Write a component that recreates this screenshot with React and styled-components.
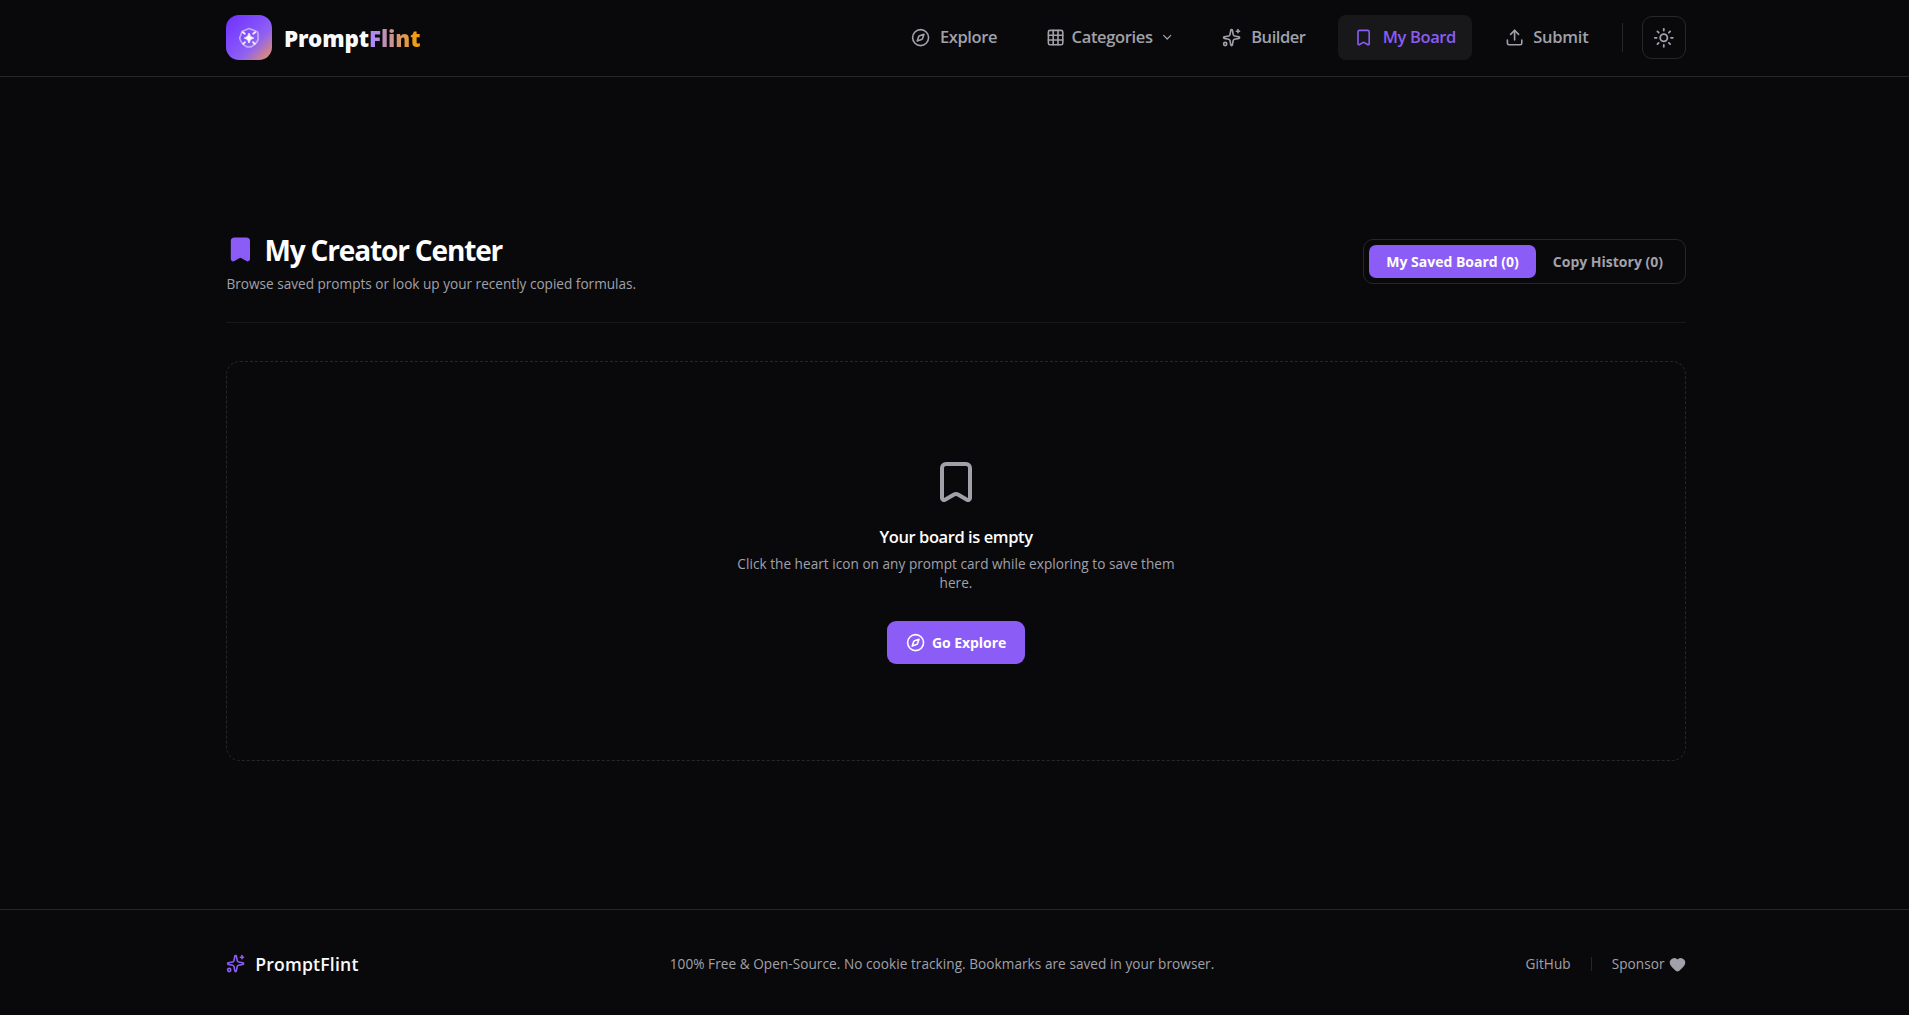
import React from 'react';
import styled, { createGlobalStyle } from 'styled-components';
import { ChevronDown, Compass, Grid3x3, Heart, Sparkles, Sun, Upload } from 'lucide-react';

const COLORS = {
  Background: '#09090b',
  Surface: '#18181b',
  Border: '#27272a',
  Muted: '#a1a1aa',
  Purple: '#8b5cf6',
  White: '#fafafa',
};

const GlobalStyle = createGlobalStyle`
  * {
    box-sizing: border-box;
    margin: 0;
    padding: 0;
  }

  body {
    background: ${COLORS.Background};
    color: ${COLORS.White};
    font-family: 'Open Sans', 'Noto Sans', sans-serif;
    overflow: hidden;
  }

  svg {
    display: block;
    flex-shrink: 0;
  }
`;

const Page = styled.div`
  display: flex;
  flex-direction: column;
  height: 100vh;
`;

const Header = styled.header`
  display: flex;
  align-items: center;
  justify-content: space-between;
  height: 77px;
  padding: 0 223px 1px 226px;
  border-bottom: 1px solid ${COLORS.Border};
`;

const Brand = styled.a`
  display: flex;
  align-items: center;
  gap: 12px;
`;

const BrandIcon = styled.span`
  display: flex;
  align-items: center;
  justify-content: center;
  width: 46px;
  height: 45px;
  border-radius: 13px;
  background: linear-gradient(135deg, #7030ff 0%, #8450fb 45%, #9163ee 65%, #f0965a 100%);
`;

const BrandName = styled.span`
  font-family: 'Noto Sans', 'Open Sans', sans-serif;
  font-size: 22.4px;
  font-weight: 900;
  letter-spacing: -0.1px;
  line-height: 30px;
  padding-top: 3px;
`;

const BrandAccent = styled.span`
  background: linear-gradient(90deg, #a78bfa 5%, #f59e0b 95%);
  background-clip: text;
  color: transparent;
`;

const Nav = styled.nav`
  display: flex;
  align-items: center;
  gap: 16.5px;
`;

const NavItem = styled.a`
  display: flex;
  align-items: center;
  gap: ${({ $tight }) => ($tight ? '6.9px' : '9.6px')};
  height: 45px;
  padding: 0 16px;
  border-radius: 8px;
  color: ${({ $active }) => ($active ? COLORS.Purple : COLORS.Muted)};
  background: ${({ $active }) => ($active ? COLORS.Surface : 'transparent')};
`;

const NavLabel = styled.span`
  padding-bottom: 2px;
  font-size: 16.5px;
  font-weight: 600;
  letter-spacing: ${({ $tracking }) => $tracking}px;
  white-space: nowrap;
`;

const NavDivider = styled.span`
  width: 1px;
  height: 29px;
  margin: 0 2.5px 0 1px;
  background: ${COLORS.Border};
`;

const ThemeButton = styled.button`
  display: flex;
  align-items: center;
  justify-content: center;
  width: 44px;
  height: 43px;
  border: 1px solid ${COLORS.Border};
  border-radius: 10px;
  background: transparent;
  color: ${COLORS.Muted};
`;

const Main = styled.main`
  flex: 1;
  padding: 152px 223px 0 226px;
`;

const PageHead = styled.div`
  display: flex;
  align-items: center;
  justify-content: space-between;
  padding-bottom: 28px;
  border-bottom: 1px solid ${COLORS.Surface};
  margin-bottom: 38px;
`;

const Title = styled.h1`
  display: flex;
  align-items: center;
  gap: 9.6px;
  height: 41px;
  font-size: 28px;
  font-weight: 700;
  letter-spacing: -1.15px;
  color: #fff;
`;

const Subtitle = styled.p`
  margin-top: 3px;
  padding-left: 0.5px;
  font-size: 13.6px;
  line-height: 21px;
  color: ${COLORS.Muted};
`;

const Tabs = styled.div`
  display: flex;
  padding: 5px;
  border: 1px solid ${COLORS.Border};
  border-radius: 10px;
`;

const Tab = styled.button`
  height: 33px;
  padding: 0 17px;
  border: 0;
  border-radius: 7px;
  font-family: inherit;
  font-size: 14px;
  font-weight: 700;
  color: ${({ $active }) => ($active ? '#fff' : COLORS.Muted)};
  background: ${({ $active }) => ($active ? COLORS.Purple : 'transparent')};
`;

const EmptyCard = styled.section`
  display: flex;
  flex-direction: column;
  align-items: center;
  justify-content: center;
  height: 400px;
  border: 1px dashed ${COLORS.Border};
  border-radius: 14px;
  color: ${COLORS.Muted};
`;

const EmptyTitle = styled.h2`
  margin-top: 19px;
  font-size: 16.5px;
  font-weight: 600;
  letter-spacing: -0.42px;
  line-height: 24px;
  color: #fff;
`;

const EmptyText = styled.p`
  width: 448px;
  margin-top: 5px;
  font-size: 13.6px;
  letter-spacing: 0.03px;
  line-height: 19px;
  text-align: center;
`;

const ExploreButton = styled.button`
  display: flex;
  align-items: center;
  gap: 7px;
  height: 43px;
  margin-top: 29px;
  padding: 0 19px;
  border: 0;
  border-radius: 9px;
  font-family: inherit;
  font-size: 14px;
  font-weight: 700;
  letter-spacing: -0.06px;
  color: #fff;
  background: ${COLORS.Purple};
`;

const Footer = styled.footer`
  display: flex;
  align-items: center;
  justify-content: space-between;
  height: 106px;
  padding: 3px 223px 0 226px;
  border-top: 1px solid ${COLORS.Border};
  font-size: 13.6px;
  color: ${COLORS.Muted};
`;

const FooterBrand = styled.div`
  display: flex;
  align-items: center;
  gap: 10px;
  font-size: 17.6px;
  font-weight: 600;
  letter-spacing: 0.2px;
  color: ${COLORS.White};

  svg {
    color: ${COLORS.Purple};
  }
`;

const FooterNote = styled.p`
  padding-bottom: 2px;
  letter-spacing: 0.05px;
`;

const FooterLinks = styled.div`
  display: flex;
  align-items: center;
  gap: 20px;
`;

const FooterLink = styled.a`
  display: flex;
  align-items: center;
  gap: 4.5px;
  padding-bottom: 2px;
  letter-spacing: 0.05px;

  svg {
    margin-top: 2px;
  }
`;

const FooterDivider = styled.span`
  width: 1px;
  height: 14px;
  background: ${COLORS.Border};
`;

const Bookmark = ({ size, fill = 'none', color = 'currentColor' }) => (
  <svg
    width={size}
    height={size}
    viewBox="0 0 24 24"
    fill={fill}
    stroke={color}
    strokeWidth="2"
    strokeLinecap="round"
    strokeLinejoin="round"
  >
    <path d="M17 3a2 2 0 0 1 2 2v15a1 1 0 0 1-1.496.868l-4.512-2.578a2 2 0 0 0-1.984 0l-4.512 2.578A1 1 0 0 1 5 20V5a2 2 0 0 1 2-2z" />
  </svg>
);

const LogoMark = () => (
  <svg width="22" height="22" viewBox="0 0 22 22" fill="none">
    <path
      d="M11 1.6 18.6 4.4Q20 5 20 6.5L20.2 12Q19.6 15.6 14.2 19.2Q11 20.8 7.8 19.2Q3.2 16.4 1.8 11.6Q1.6 10.6 2.3 9.4L4 4.6Z"
      stroke="#d9c8ff"
      strokeOpacity="0.75"
      strokeWidth="1.6"
      strokeLinejoin="round"
    />
    <path
      d="m4.8 5.2 2 1.6M17.2 5.2l-2 1.6M5.2 16.8l1.8-1.7M16.8 16.8 15 15.1"
      stroke="#fff"
      strokeOpacity="0.9"
      strokeWidth="1.8"
      strokeLinecap="round"
    />
    <path
      d="M11 6Q11.6 10.4 15.8 11Q11.6 11.6 11 16Q10.4 11.6 6.2 11Q10.4 10.4 11 6Z"
      fill="#fff"
      stroke="#fff"
      strokeWidth="0.8"
    />
  </svg>
);

const NAV_ITEMS = [
  { label: 'Explore', icon: Compass, tracking: -0.4 },
  { label: 'Categories', icon: Grid3x3, tracking: -0.35, menu: true },
  { label: 'Builder', icon: Sparkles, tracking: -0.45 },
  { label: 'My Board', icon: Bookmark, tracking: -0.375, active: true },
  { label: 'Submit', icon: Upload, tracking: -0.25 },
];

const App = () => {
  return (
    <Page>
      <GlobalStyle />

      <Header>
        <Brand>
          <BrandIcon>
            <LogoMark />
          </BrandIcon>
          <BrandName>
            Prompt<BrandAccent>Flint</BrandAccent>
          </BrandName>
        </Brand>

        <Nav>
          {NAV_ITEMS.map(({ label, icon: Icon, tracking, menu, active }) => (
            <NavItem key={label} $tight={menu} $active={active}>
              <Icon size={19.2} />
              <NavLabel $tracking={tracking}>{label}</NavLabel>
              {menu && <ChevronDown size={14.4} />}
            </NavItem>
          ))}
          <NavDivider />
          <ThemeButton aria-label="Toggle theme">
            <Sun size={21.6} />
          </ThemeButton>
        </Nav>
      </Header>

      <Main>
        <PageHead>
          <div>
            <Title>
              <Bookmark size={28.8} color={COLORS.Purple} fill={COLORS.Purple} />
              My Creator Center
            </Title>
            <Subtitle>Browse saved prompts or look up your recently copied formulas.</Subtitle>
          </div>
          <Tabs>
            <Tab $active>My Saved Board (0)</Tab>
            <Tab>Copy History (0)</Tab>
          </Tabs>
        </PageHead>

        <EmptyCard>
          <Bookmark size={48} />
          <EmptyTitle>Your board is empty</EmptyTitle>
          <EmptyText>
            Click the heart icon on any prompt card while exploring to save them here.
          </EmptyText>
          <ExploreButton>
            <Compass size={19.2} />
            Go Explore
          </ExploreButton>
        </EmptyCard>
      </Main>

      <Footer>
        <FooterBrand>
          <Sparkles size={19.2} />
          PromptFlint
        </FooterBrand>
        <FooterNote>
          100% Free &amp; Open-Source. No cookie tracking. Bookmarks are saved in your browser.
        </FooterNote>
        <FooterLinks>
          <FooterLink>GitHub</FooterLink>
          <FooterDivider />
          <FooterLink>
            Sponsor
            <Heart size={17} fill={COLORS.Muted} />
          </FooterLink>
        </FooterLinks>
      </Footer>
    </Page>
  );
};

export default App;
